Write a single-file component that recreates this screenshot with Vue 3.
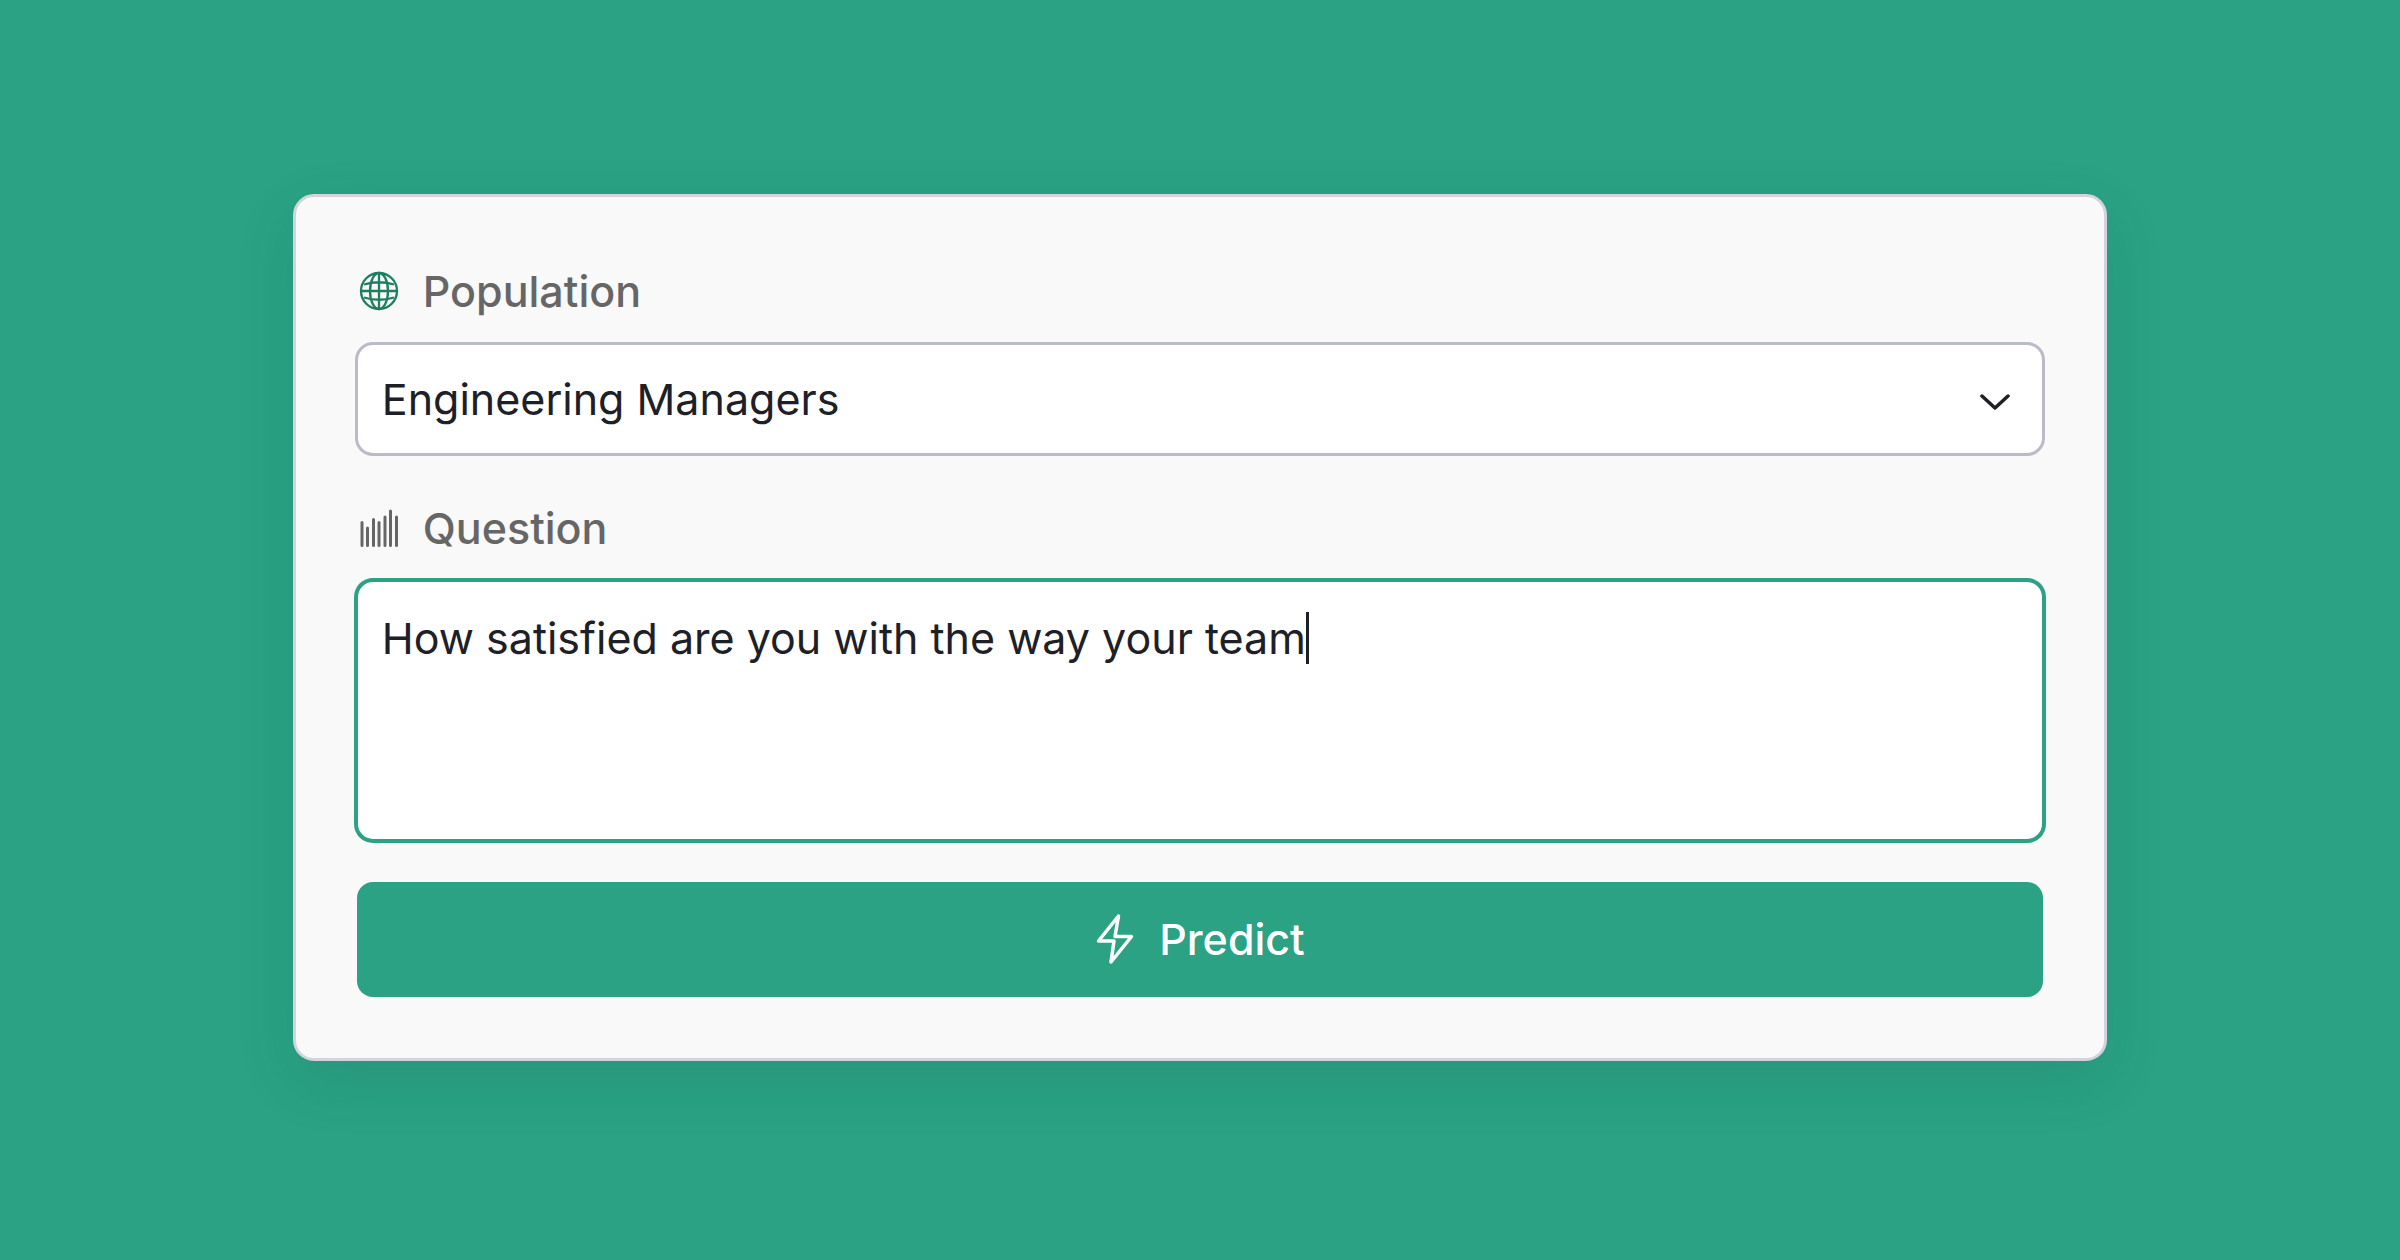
<template>
  <main class="page">
    <form class="card" @submit.prevent>
      <label class="field-label" for="population">
        <svg class="icon icon-globe" viewBox="0 0 40 40" aria-hidden="true">
          <circle cx="20" cy="20" r="18" />
          <ellipse cx="20" cy="20" rx="9" ry="18" />
          <path d="M20 2v36M2 20h36M5 13.5Q20 9 35 13.5M5 26.5Q20 31 35 26.5" />
        </svg>
        <span>Population</span>
      </label>
      <div class="select-wrap">
        <select id="population" v-model="population" class="control select">
          <option v-for="item in populations" :key="item">{{ item }}</option>
        </select>
        <svg class="chevron" viewBox="0 0 30 18" aria-hidden="true">
          <path d="M2 3L15 15L28 3" />
        </svg>
      </div>

      <label class="field-label" for="question">
        <svg class="icon icon-bars" viewBox="0 0 40 40" aria-hidden="true">
          <path d="M3 14.5v23M8.5 20v17.5M14.5 11.5v26M20 14.5v23M26 9v28.5M31.5 3v34.5M37.5 9v28.5" />
        </svg>
        <span>Question</span>
      </label>
      <div class="textarea-wrap">
        <textarea id="question" ref="field" v-model="question" class="control textarea" spellcheck="false"></textarea>
        <span class="caret" :style="{ left: caretLeft + 'px' }"></span>
      </div>

      <button class="predict" type="submit">
        <svg class="bolt" viewBox="0 0 40 52" aria-hidden="true">
          <path d="M23.5 3L3.5 28H19L16 49L36.5 23.5H20Z" />
        </svg>
        <span>Predict</span>
      </button>
    </form>
  </main>
</template>

<script setup>
import { nextTick, onMounted, ref, watch } from 'vue';

const populations = ['Engineering Managers'];
const population = ref(populations[0]);
const question = ref('How satisfied are you with the way your team');

const field = ref(null);
const caretLeft = ref(0);

// keeps the thick caret at the end of the typed line
function placeCaret() {
  const style = getComputedStyle(field.value);
  const ctx = document.createElement('canvas').getContext('2d');
  ctx.font = `${style.fontWeight} ${style.fontSize} ${style.fontFamily}`;
  const start = parseFloat(style.paddingLeft) + parseFloat(style.borderLeftWidth);
  caretLeft.value = Math.round(start + ctx.measureText(question.value).width);
}

onMounted(placeCaret);
watch(question, () => nextTick(placeCaret));
</script>

<style>
body {
  margin: 0;
  background: #2aa283;
}
</style>

<style scoped>
.page {
  min-height: 100vh;
  box-sizing: border-box;
  padding: 40px 0 46px;
  display: flex;
  align-items: center;
  justify-content: center;
  background: #2aa283;
  font-family: Inter, 'Liberation Sans', sans-serif;
  font-size: 43px;
  line-height: 56px;
}

.card {
  box-sizing: border-box;
  width: 75.6%;
  padding: 66px 59px 61px;
  display: flex;
  flex-direction: column;
  background: #f9f9f9;
  border: 3px solid #d3d3dd;
  border-radius: 21px;
  box-shadow: 0 20px 60px rgba(24, 64, 80, 0.12);
}

.field-label {
  display: flex;
  align-items: center;
  gap: 24px;
  margin-bottom: 23px;
  padding-left: 4px;
  color: #666666;
  font-weight: 500;
}

.icon {
  width: 40px;
  height: 40px;
  fill: none;
}

.icon-globe {
  stroke: #1b7f60;
  stroke-width: 2.3;
}

.icon-bars {
  stroke: #666666;
  stroke-width: 3;
  stroke-linecap: round;
}

.control {
  display: block;
  box-sizing: border-box;
  width: 100%;
  margin: 0;
  border: 3px solid #b9bbc9;
  border-radius: 18px;
  background: #ffffff;
  color: #1d2027;
  font: inherit;
  outline: none;
}

.select-wrap {
  position: relative;
  margin-bottom: 44px;
}

.select {
  height: 114px;
  padding: 0 100px 0 24px;
  appearance: none;
}

.chevron {
  position: absolute;
  top: 50%;
  right: 35px;
  width: 30px;
  height: 18px;
  margin-top: -6px;
  fill: none;
  stroke: #1d2027;
  stroke-width: 3.5;
  stroke-linecap: round;
  stroke-linejoin: round;
  pointer-events: none;
}

.textarea-wrap {
  position: relative;
  margin-bottom: 40px;
}

.textarea {
  height: 263px;
  padding: 28px 24px;
  border-color: #2aa283;
  box-shadow: 0 0 0 1px #2aa283;
  caret-color: transparent;
  resize: none;
}

.caret {
  position: absolute;
  top: 33px;
  width: 3px;
  height: 52px;
  background: #1d2027;
  pointer-events: none;
}

.predict {
  display: flex;
  align-items: center;
  justify-content: center;
  gap: 24px;
  height: 115px;
  margin: 0 2px;
  border: 0;
  border-radius: 16px;
  background: #2aa283;
  color: #ffffff;
  font: inherit;
  font-weight: 500;
  cursor: pointer;
}

.bolt {
  width: 40px;
  height: 52px;
  fill: none;
  stroke: #ffffff;
  stroke-width: 3.5;
  stroke-linejoin: round;
}
</style>
